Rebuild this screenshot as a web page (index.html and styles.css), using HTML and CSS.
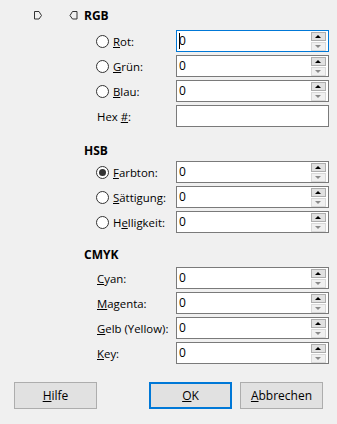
FILE: index.html
```html
<!DOCTYPE html>
<html lang="de">
<head>
<meta charset="utf-8">
<link rel="stylesheet" href="styles.css">
</head>
<body>
<div class="dialog">
  <div class="toprow">
    <svg class="icon icon-a" width="9" height="9" viewBox="0 0 9 9"><polygon points="0.5,0.5 5,0.5 7.5,4.5 5,8 0.5,8" fill="none" stroke="#333" stroke-width="1"/></svg>
    <svg class="icon icon-b" width="9" height="9" viewBox="0 0 9 9"><polygon points="8,0.5 3.5,0.5 1,4.5 3.5,8 8,8" fill="none" stroke="#333" stroke-width="1"/></svg>
    <div class="heading">RGB</div>
  </div>
  <div class="section sec-rgb">
    <div class="row"><span class="radio"></span><span class="lbl"><u>R</u>ot:</span><div class="field focus"><span class="caret"></span><span class="val">0</span><span class="spin"><span class="up"></span><span class="down"></span></span></div></div>
    <div class="row"><span class="radio"></span><span class="lbl"><u>G</u>rün:</span><div class="field"><span class="val">0</span><span class="spin"><span class="up"></span><span class="down"></span></span></div></div>
    <div class="row"><span class="radio"></span><span class="lbl"><u>B</u>lau:</span><div class="field"><span class="val">0</span><span class="spin"><span class="up"></span><span class="down"></span></span></div></div>
    <div class="row"><span class="lbl plain">Hex <u>#</u>:</span><div class="field"></div></div>
  </div>
  <div class="heading sec-head hsb">HSB</div>
  <div class="section">
    <div class="row"><span class="radio checked"></span><span class="lbl"><u>F</u>arbton:</span><div class="field"><span class="val">0</span><span class="spin"><span class="up"></span><span class="down"></span></span></div></div>
    <div class="row"><span class="radio"></span><span class="lbl"><u>S</u>ättigung:</span><div class="field"><span class="val">0</span><span class="spin"><span class="up"></span><span class="down"></span></span></div></div>
    <div class="row"><span class="radio"></span><span class="lbl">H<u>e</u>lligkeit:</span><div class="field"><span class="val">0</span><span class="spin"><span class="up"></span><span class="down"></span></span></div></div>
  </div>
  <div class="heading sec-head cmyk">CMYK</div>
  <div class="section">
    <div class="row"><span class="lbl plain"><u>C</u>yan:</span><div class="field"><span class="val">0</span><span class="spin"><span class="up"></span><span class="down"></span></span></div></div>
    <div class="row"><span class="lbl plain"><u>M</u>agenta:</span><div class="field"><span class="val">0</span><span class="spin"><span class="up"></span><span class="down"></span></span></div></div>
    <div class="row"><span class="lbl plain"><u>G</u>elb (Yellow):</span><div class="field"><span class="val">0</span><span class="spin"><span class="up"></span><span class="down"></span></span></div></div>
    <div class="row"><span class="lbl plain"><u>K</u>ey:</span><div class="field"><span class="val">0</span><span class="spin"><span class="up"></span><span class="down"></span></span></div></div>
  </div>
  <div class="buttons">
    <button class="btn"><u>H</u>ilfe</button>
    <span class="spacer"></span>
    <button class="btn default"><u>O</u>K</button>
    <button class="btn"><u>A</u>bbrechen</button>
  </div>
</div>
</body>
</html>
```
FILE: styles.css
```css
html, body {
  margin: 0;
  padding: 0;
  background: #f0f0f0;
}
body {
  font-family: "Open Sans", "Noto Sans", sans-serif;
  font-size: 11.4px;
  color: #000;
  width: 337px;
  height: 424px;
  overflow: hidden;
}
.dialog {
  display: flex;
  flex-direction: column;
}
.toprow {
  display: flex;
  align-items: center;
  height: 16px;
  margin-top: 8px;
}
.icon { display: block; }
.icon-a { margin-left: 34px; margin-top: -2px; }
.icon-b { margin-left: 26px; margin-top: -2px; }
.heading {
  font-weight: bold;
  font-size: 12px;
  line-height: 16px;
}
.toprow .heading { margin-left: 6px; }
.sec-head { margin-left: 84px; }
.sec-rgb { margin-top: 6px; }
.hsb { margin-top: 16px; margin-bottom: 2px; }
.cmyk { margin-top: 14px; margin-bottom: 4px; }
.section {
  display: flex;
  flex-direction: column;
  gap: 3px;
  padding-left: 96px;
  padding-right: 8px;
}
.row {
  display: flex;
  align-items: center;
  height: 22px;
}
.radio {
  width: 11px;
  height: 11px;
  border: 1px solid #333;
  border-radius: 50%;
  background: #fff;
  margin-right: 4px;
  flex: none;
  position: relative;
}
.radio.checked::after {
  content: "";
  position: absolute;
  left: 2px;
  top: 2px;
  width: 7px;
  height: 7px;
  border-radius: 50%;
  background: #333;
}
.lbl {
  flex: 1;
  min-width: 0;
  white-space: nowrap;
}
.lbl.plain { padding-left: 1px; }
.field {
  width: 151px;
  height: 20px;
  border: 1px solid #7a7a7a;
  background: #fff;
  display: flex;
  align-items: center;
  flex: none;
  font-size: 12px;
}
.field.focus { border-color: #0078d7; }
.caret {
  width: 1px;
  height: 16px;
  background: #000;
  margin-left: 2px;
  margin-right: -3px;
}
.val {
  flex: 1;
  padding-left: 2px;
  line-height: 16px;
}
.spin {
  display: flex;
  flex-direction: column;
  gap: 1px;
  margin-right: 2px;
}
.up, .down {
  width: 13px;
  height: 7px;
  position: relative;
}
.up {
  background: #e1e1e1;
  border: 1px solid #adadad;
}
.down {
  background: #f0f0f0;
  border: 1px solid #d9d9d9;
}
.up::after, .down::after {
  content: "";
  position: absolute;
  left: 3px;
  width: 0;
  height: 0;
  border-left: 3.5px solid transparent;
  border-right: 3.5px solid transparent;
}
.up::after {
  top: 2px;
  border-bottom: 3px solid #000;
}
.down::after {
  top: 2px;
  border-top: 3px solid #8a8a8a;
}
.buttons {
  display: flex;
  gap: 8px;
  padding: 0 14px;
  margin-top: 18px;
}
.spacer { flex: 1; }
.btn {
  width: 83px;
  height: 27px;
  background: #e1e1e1;
  border: 1px solid #adadad;
  font: inherit;
  font-size: 12px;
  color: #000;
  padding: 0;
  margin: 0;
}
.btn.default { border: 2px solid #0078d7; }
```
